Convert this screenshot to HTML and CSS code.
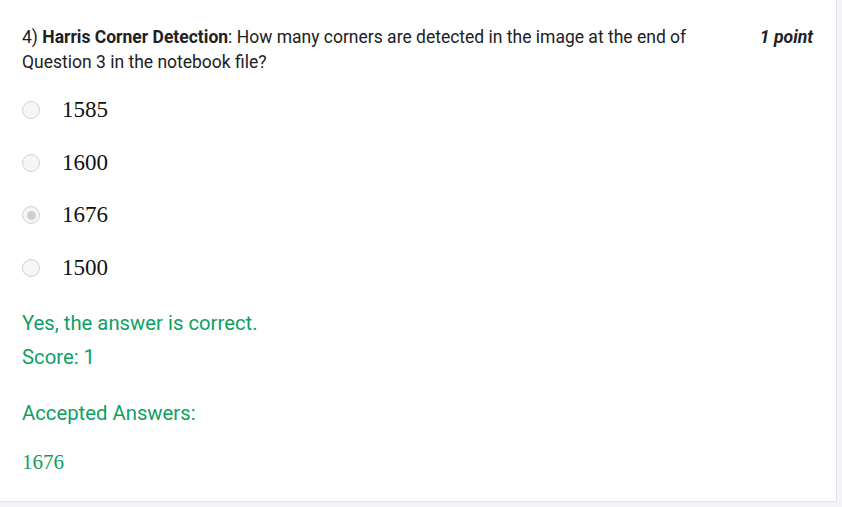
FILE: index.html
```html
<!DOCTYPE html>
<html>
<head>
<meta charset="utf-8">
<link rel="stylesheet" href="styles.css">
</head>
<body>
<div class="card">
  <div class="qhead">
    <div class="qtext">4) <b>Harris Corner Detection</b>: How many corners are detected in the image at the end of Question 3 in the notebook file?</div>
    <div class="points">1 point</div>
  </div>
  <div class="options">
    <label class="opt"><span class="radio"></span><span class="num">1585</span></label>
    <label class="opt"><span class="radio"></span><span class="num">1600</span></label>
    <label class="opt"><span class="radio checked"></span><span class="num">1676</span></label>
    <label class="opt"><span class="radio"></span><span class="num">1500</span></label>
  </div>
  <div class="feedback">
    <div class="fb-line">Yes, the answer is correct.</div>
    <div class="fb-line">Score: 1</div>
    <div class="fb-line accepted">Accepted Answers:</div>
    <div class="answer">1676</div>
  </div>
</div>
</body>
</html>
```
FILE: styles.css
```css
html, body {
  margin: 0;
  padding: 0;
  background: #f4f4f8;
}
body {
  width: 842px;
  height: 507px;
  overflow: hidden;
  font-family: Roboto, "Liberation Sans", sans-serif;
}
.card {
  width: 837px;
  height: 502px;
  box-sizing: border-box;
  background: #ffffff;
  border-right: 1px solid #e2e2ea;
  border-bottom: 1px solid #e2e2ea;
  padding: 25px 0 0 22px;
}
.qhead {
  display: flex;
  justify-content: space-between;
  align-items: flex-start;
}
.qtext {
  width: 680px;
  font-size: 17.5px;
  line-height: 25px;
  color: #202124;
}
.qtext b {
  font-weight: 700;
}
.points {
  font-size: 17.6px;
  line-height: 25px;
  font-weight: 700;
  font-style: italic;
  color: #202124;
  margin-right: 23px;
}
.options {
  display: flex;
  flex-direction: column;
  margin-top: 9px;
}
.opt {
  display: flex;
  align-items: center;
  height: 52.5px;
}
.radio {
  width: 18px;
  height: 18px;
  box-sizing: border-box;
  border-radius: 50%;
  border: 1px solid #d3d3d3;
  background: #f6f6f6;
  margin-right: 22px;
  position: relative;
  flex: none;
}
.radio.checked::after {
  content: "";
  position: absolute;
  left: 3.5px;
  top: 3.5px;
  width: 9px;
  height: 9px;
  border-radius: 50%;
  background: #cfcfcf;
}
.num {
  font-family: "Liberation Serif", "DejaVu Serif", serif;
  font-size: 23px;
  color: #111;
}
.feedback {
  color: #0f9f62;
  margin-top: 12px;
}
.fb-line {
  font-size: 20.3px;
  line-height: 34px;
}
.accepted {
  margin-top: 22px;
}
.answer {
  font-family: "Liberation Serif", "DejaVu Serif", serif;
  font-size: 21px;
  margin-top: 20px;
}
```
